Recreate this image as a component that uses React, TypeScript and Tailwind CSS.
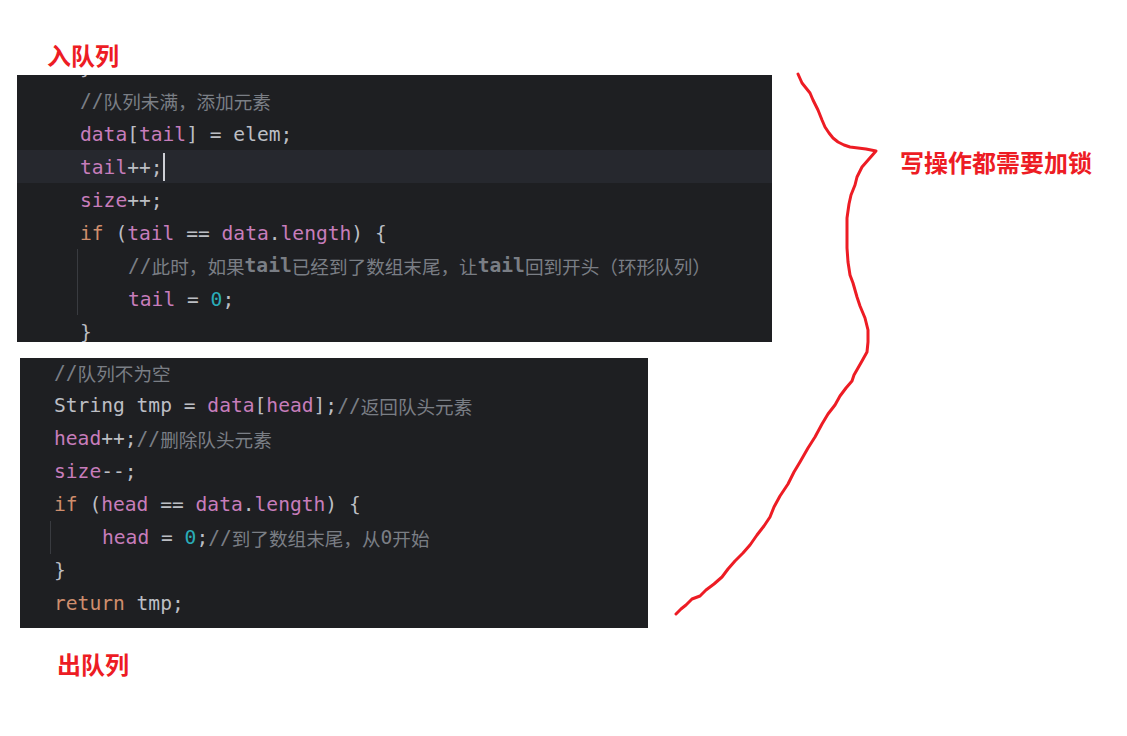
import React from 'react';

type Tok = { t: string; c?: 'kw' | 'fd' | 'num' | 'cm' | 'cmb' | 'cjk' };

const colorOf: Record<string, string> = {
  kw: 'text-[#cf8e6d]',
  fd: 'text-[#c77dbb]',
  num: 'text-[#2aacb8]',
  cm: 'text-[#7a7e85]',
  cmb: 'text-[#7a7e85] font-bold',
  cjk: 'text-[#7a7e85] text-[18.6px]',
};

const Line = ({ toks, cursor }: { toks: Tok[]; cursor?: boolean }) => (
  <span className="flex items-center">
    {toks.map((k, i) => (
      <span
        key={i}
        className={k.c ? colorOf[k.c] : ''}
        style={k.c === 'cjk' ? { fontFamily: '"Noto Sans CJK SC", sans-serif' } : undefined}
      >
        {k.t}
      </span>
    ))}
    {cursor && <span className="inline-block w-[2px] h-[28px] bg-[#ced0d6]" />}
  </span>
);

// Red hand-drawn brace
const bracePts =
  '798,74 802,83 810,93 813,100 818,110 822,120 825,127 829,133 833,138 838,142 844,145 850,147 858,148 866,149 876,151 869,159 862,167 857,177 855,185 851,195 849,204 847,218 847,232 847,248 848,262 850,275 853,283 857,297 860,306 865,318 868,330 868,342 867,352 862,361 858,368 854,375 852,381 846,388 840,396 835,405 828,414 822,424 815,437 808,448 800,462 794,472 788,484 780,496 774,507 770,517 764,526 757,535 750,545 743,553 735,561 728,569 722,577 714,584 706,590 700,596 692,599 686,605 681,609 676,614';

const Label = ({ children, className }: { children: React.ReactNode; className: string }) => (
  <div
    className={`text-[24px] leading-[32px] font-bold text-[#ed1c24] ${className}`}
    style={{ fontFamily: '"Noto Sans CJK SC", sans-serif' }}
  >
    {children}
  </div>
);

export default function App() {
  const mono = { fontFamily: '"DejaVu Sans Mono", "Noto Sans CJK SC", monospace' };

  return (
    <div className="relative w-[1127px] h-[736px] bg-white overflow-hidden flex">
      <div className="flex flex-col">
        <Label className="ml-[47px] mt-[39px]">入队列</Label>

        {/* enqueue snippet */}
        <div
          className="mt-[4px] ml-[17px] w-[755px] h-[267px] bg-[#1e1f22] overflow-hidden text-[19.6px] text-[#bcbec4]"
          style={mono}
        >
          <div className="-mt-[24px] flex flex-col whitespace-pre">
            <div className="h-[33px] flex items-center pl-[63px]">
              <Line toks={[{ t: '}' }]} />
            </div>
            <div className="h-[33px] flex items-center pl-[63px]">
              <Line toks={[{ t: '//', c: 'cm' }, { t: '队列未满，添加元素', c: 'cjk' }]} />
            </div>
            <div className="h-[33px] flex items-center pl-[63px] pt-[2px]">
              <Line toks={[{ t: 'data', c: 'fd' }, { t: '[' }, { t: 'tail', c: 'fd' }, { t: '] = elem;' }]} />
            </div>
            <div className="h-[33px] flex items-center pl-[63px] pt-[2px] bg-[#26282e]">
              <Line toks={[{ t: 'tail', c: 'fd' }, { t: '++;' }]} cursor />
            </div>
            <div className="h-[33px] flex items-center pl-[63px] pt-[2px]">
              <Line toks={[{ t: 'size', c: 'fd' }, { t: '++;' }]} />
            </div>
            <div className="h-[33px] flex items-center pl-[63px] pt-[2px]">
              <Line
                toks={[
                  { t: 'if', c: 'kw' },
                  { t: ' (' },
                  { t: 'tail', c: 'fd' },
                  { t: ' == ' },
                  { t: 'data', c: 'fd' },
                  { t: '.' },
                  { t: 'length', c: 'fd' },
                  { t: ') {' },
                ]}
              />
            </div>
            <div className="pl-[60px]">
              <div className="border-l border-[#393b40] pl-[50px]">
                <div className="h-[33px] flex items-center">
                  <Line
                    toks={[
                      { t: '//', c: 'cm' },
                      { t: '此时，如果', c: 'cjk' },
                      { t: 'tail', c: 'cmb' },
                      { t: '已经到了数组末尾，让', c: 'cjk' },
                      { t: 'tail', c: 'cmb' },
                      { t: '回到开头（环形队列）', c: 'cjk' },
                    ]}
                  />
                </div>
                <div className="h-[33px] flex items-center pt-[2px]">
                  <Line toks={[{ t: 'tail', c: 'fd' }, { t: ' = ' }, { t: '0', c: 'num' }, { t: ';' }]} />
                </div>
              </div>
            </div>
            <div className="h-[33px] flex items-center pl-[63px] pt-[2px]">
              <Line toks={[{ t: '}' }]} />
            </div>
          </div>
        </div>

        {/* dequeue snippet */}
        <div
          className="mt-[16px] ml-[20px] w-[628px] h-[270px] bg-[#1e1f22] overflow-hidden text-[19.6px] text-[#bcbec4]"
          style={mono}
        >
          <div className="-mt-[2px] flex flex-col whitespace-pre">
            <div className="h-[33px] flex items-center pl-[34px]">
              <Line toks={[{ t: '//', c: 'cm' }, { t: '队列不为空', c: 'cjk' }]} />
            </div>
            <div className="h-[33px] flex items-center pl-[34px]">
              <Line
                toks={[
                  { t: 'String tmp = ' },
                  { t: 'data', c: 'fd' },
                  { t: '[' },
                  { t: 'head', c: 'fd' },
                  { t: '];' },
                  { t: '//', c: 'cm' },
                  { t: '返回队头元素', c: 'cjk' },
                ]}
              />
            </div>
            <div className="h-[33px] flex items-center pl-[34px]">
              <Line toks={[{ t: 'head', c: 'fd' }, { t: '++;' }, { t: '//', c: 'cm' }, { t: '删除队头元素', c: 'cjk' }]} />
            </div>
            <div className="h-[33px] flex items-center pl-[34px]">
              <Line toks={[{ t: 'size', c: 'fd' }, { t: '--;' }]} />
            </div>
            <div className="h-[33px] flex items-center pl-[34px]">
              <Line
                toks={[
                  { t: 'if', c: 'kw' },
                  { t: ' (' },
                  { t: 'head', c: 'fd' },
                  { t: ' == ' },
                  { t: 'data', c: 'fd' },
                  { t: '.' },
                  { t: 'length', c: 'fd' },
                  { t: ') {' },
                ]}
              />
            </div>
            <div className="pl-[30px]">
              <div className="border-l border-[#393b40] pl-[51px]">
                <div className="h-[33px] flex items-center">
                  <Line
                    toks={[
                      { t: 'head', c: 'fd' },
                      { t: ' = ' },
                      { t: '0', c: 'num' },
                      { t: ';' },
                      { t: '//', c: 'cm' },
                      { t: '到了数组末尾，从', c: 'cjk' },
                      { t: '0', c: 'cm' },
                      { t: '开始', c: 'cjk' },
                    ]}
                  />
                </div>
              </div>
            </div>
            <div className="h-[33px] flex items-center pl-[34px]">
              <Line toks={[{ t: '}' }]} />
            </div>
            <div className="h-[33px] flex items-center pl-[34px]">
              <Line toks={[{ t: 'return', c: 'kw' }, { t: ' tmp;' }]} />
            </div>
          </div>
        </div>

        <Label className="ml-[57px] mt-[20px]">出队列</Label>
      </div>

      <Label className="ml-[128px] mt-[146px] self-start">写操作都需要加锁</Label>

      <svg className="absolute inset-0 pointer-events-none" width="1127" height="736" viewBox="0 0 1127 736">
        <polyline
          points={bracePts}
          fill="none"
          stroke="#ed1c24"
          strokeWidth={3}
          strokeLinejoin="round"
          strokeLinecap="round"
        />
      </svg>
    </div>
  );
}
